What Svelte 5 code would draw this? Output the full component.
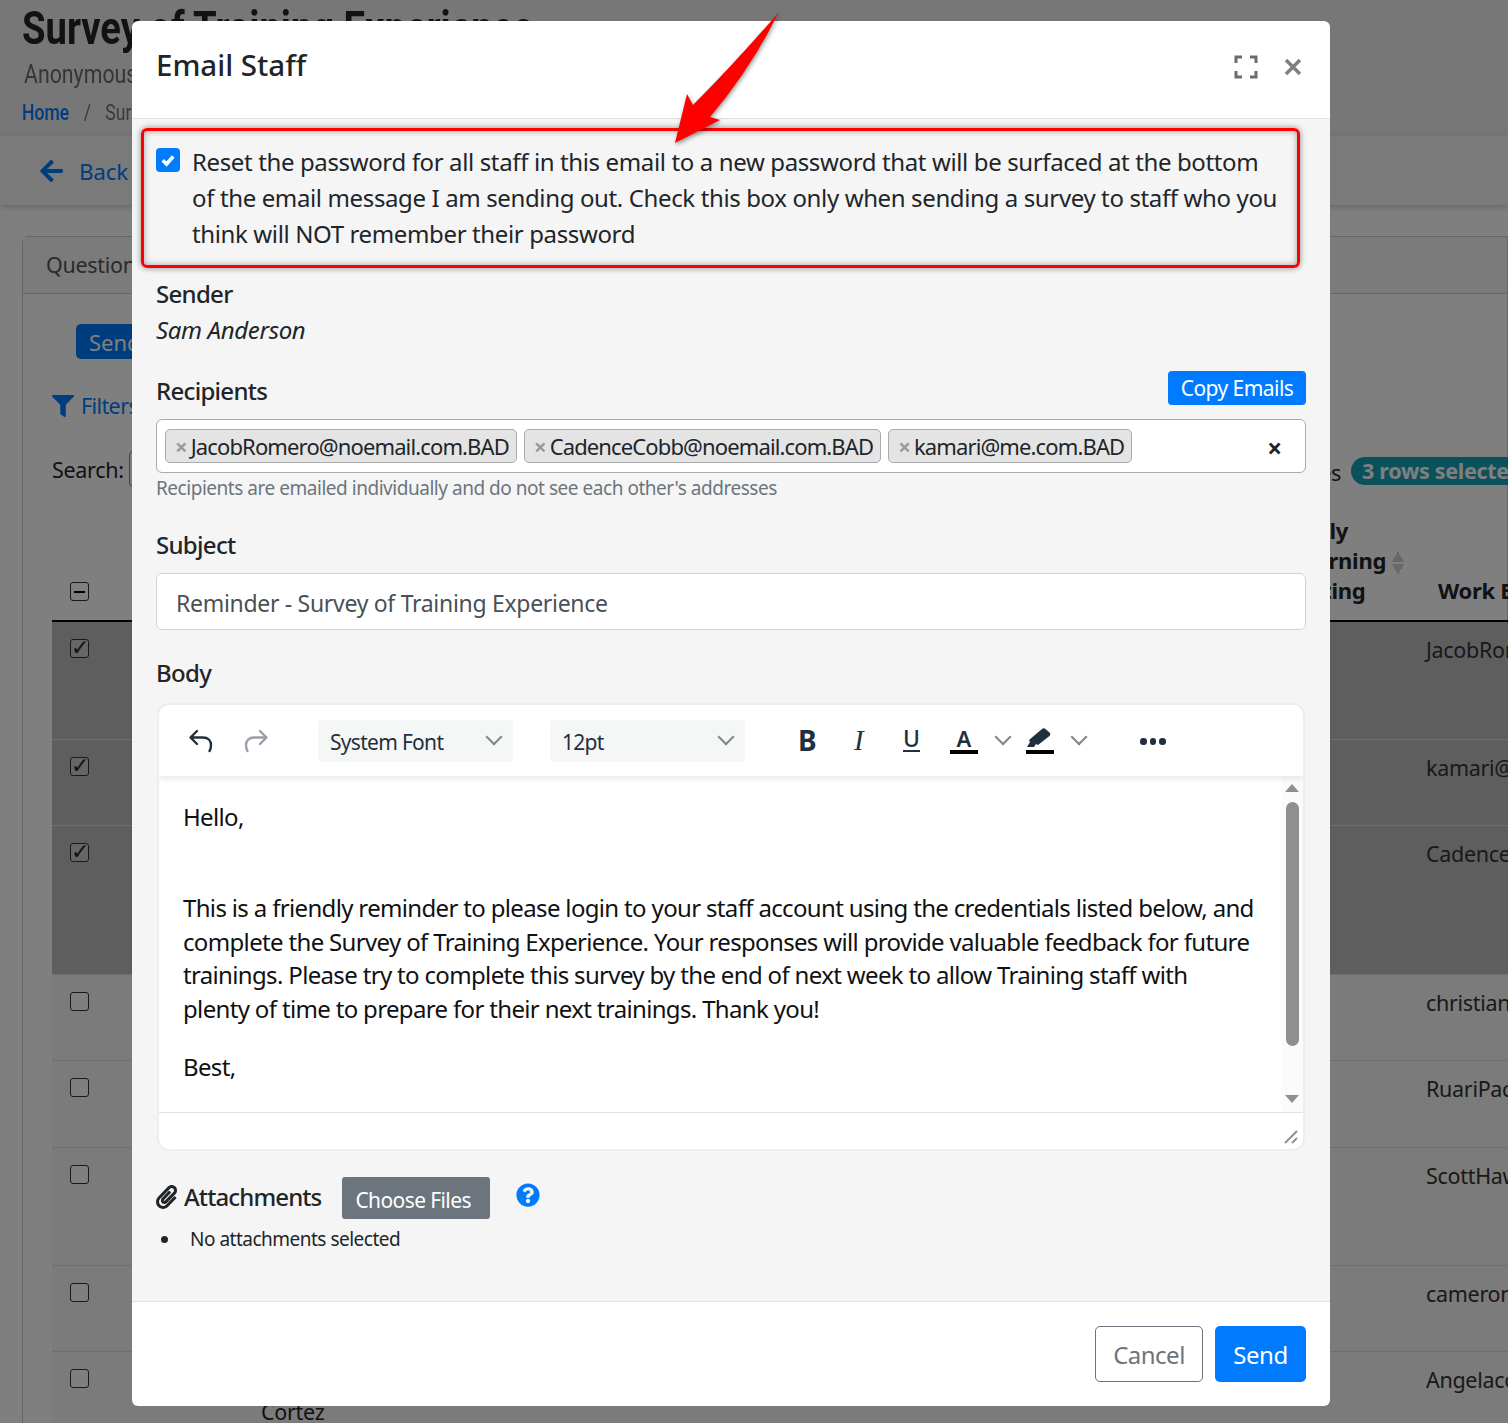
<script>
	const rows = [
		{ name: "Harris", last: "", email: "JacobRomero@noemail.com.BAD", h: 118, on: true },
		{ name: "Hill", last: "", email: "kamari@me.com.BAD", h: 86, on: true },
		{ name: "Hall", last: "", email: "CadenceCobb@noemail.com.BAD", h: 149, on: true },
		{ name: "Hayes", last: "", email: "christian@noemail.com.BAD", h: 86, on: false },
		{ name: "Hunt", last: "", email: "RuariPace@noemail.com.BAD", h: 87, on: false },
		{ name: "Holt", last: "", email: "ScottHawkins@noemail.com.BAD", h: 118, on: false },
		{ name: "Howe", last: "", email: "cameron@noemail.com.BAD", h: 86, on: false },
		{ name: "Hart", last: "Cortez", email: "Angelacortez@noemail.com.BAD", h: 90, on: false }
	];
	const recipients = [
		"JacobRomero@noemail.com.BAD",
		"CadenceCobb@noemail.com.BAD",
		"kamari@me.com.BAD"
	];
</script>

<div class="page">
	<header class="top">
		<h1>Survey of Training Experience</h1>
		<div class="sub">Anonymous</div>
		<div class="crumbs"><a href="#home">Home</a><span>/</span><span>Survey</span></div>
	</header>
	<div class="backbar">
		<svg class="back-arrow" viewBox="0 0 448 512"><path d="M257.5 445.1l-22.2 22.2c-9.4 9.4-24.6 9.4-33.9 0L7 273c-9.4-9.4-9.4-24.6 0-33.9L201.4 44.7c9.4-9.4 24.6-9.4 33.9 0l22.2 22.2c9.5 9.5 9.3 25-.4 34.3L136.6 216H424c13.3 0 24 10.7 24 24v32c0 13.3-10.7 24-24 24H136.6l120.5 114.8c9.8 9.3 10 24.8.4 34.3z" /></svg>
		<a href="#back">Back</a>
	</div>
	<section class="card">
		<div class="card-head">Questions</div>
		<div class="card-body">
			<button class="send-bg">Send</button>
			<div class="filters">
				<svg viewBox="0 0 512 512"><path d="M487.976 0H24.028C2.71 0-8.047 25.866 7.058 40.971L192 225.941V432c0 7.831 3.821 15.17 10.237 19.662l80 55.98C298.02 518.69 320 507.493 320 487.98V225.941l184.947-184.97C520.021 25.896 509.338 0 487.976 0z" /></svg>
				<a href="#filters">Filters</a>
			</div>
			<div class="searchline">
				<label for="q">Search:</label>
				<input id="q" />
				<span class="info">Showing entries</span>
				<span class="pill">3 rows selected</span>
			</div>
			<table>
				<colgroup>
					<col style="width: 70px" />
					<col style="width: 139px" />
					<col style="width: 1165px" />
					<col style="width: 500px" />
				</colgroup>
				<thead>
					<tr>
						<th><span class="box minus"></span></th>
						<th></th>
						<th class="warn">
							<span>Early<br />Warning<i class="sort"></i><br />Rating</span>
						</th>
						<th class="mail">Work Email</th>
					</tr>
				</thead>
				<tbody>
					{#each rows as r}
						<tr class:on={r.on} style="height: {r.h}px">
							<td><span class="box" class:ticked={r.on}>{r.on ? "✓" : ""}</span></td>
							<td><a href="#row">{r.name}</a></td>
							<td class="lastname">{r.last}</td>
							<td class="mailcell">{r.email}</td>
						</tr>
					{/each}
				</tbody>
			</table>
		</div>
	</section>
</div>

<div class="backdrop"></div>

<div class="modal">
	<div class="m-head">
		<h2>Email Staff</h2>
		<div class="m-actions">
			<svg class="expand" viewBox="0 0 24 24"><path d="M2 8V2h6M16 2h6v6M22 16v6h-6M8 22H2v-6" /></svg>
			<svg class="close" viewBox="0 0 20 20"><path d="M3 3l14 14M17 3L3 17" /></svg>
		</div>
	</div>

	<div class="m-body">
		<div class="reset">
			<span class="check">
				<svg viewBox="0 0 16 16"><path d="M4.500 8.200l2.500 2.500 4.500-5" /></svg>
			</span>
			<p>Reset the password for all staff in this email to a new password that will be surfaced at the bottom of the email message I am sending out. Check this box only when sending a survey to staff who you think will NOT remember their password</p>
		</div>

		<div class="label sender">Sender</div>
		<div class="who">Sam Anderson</div>

		<div class="rec-head">
			<div class="label">Recipients</div>
			<button class="copy">Copy Emails</button>
		</div>
		<div class="tags">
			{#each recipients as r}
				<span class="tag"><b>×</b>{r}</span>
			{/each}
			<span class="clear">×</span>
		</div>
		<div class="help">Recipients are emailed individually and do not see each other's addresses</div>

		<div class="label subject">Subject</div>
		<div class="subject-input">Reminder - Survey of Training Experience</div>

		<div class="label bodylabel">Body</div>
		<div class="editor">
			<div class="toolbar">
				<svg class="tool undo" viewBox="0 0 26 26"><path d="M9 3L2.500 9.500L9 16M3 9.500h12c5 0 8 3 8 7.500v0c0 2.500-.5 4.500-1.500 6" /></svg>
				<svg class="tool redo" viewBox="0 0 26 26"><path d="M17 3l6.500 6.500L17 16M23 9.500H11c-5 0-8 3-8 7.500 0 2.500.5 4.500 1.500 6" /></svg>
				<div class="sel first">System Font<i class="chev"></i></div>
				<div class="sel second">12pt<i class="chev"></i></div>
				<span class="t-b">B</span>
				<span class="t-i">I</span>
				<span class="t-u">U</span>
				<span class="t-a">A</span>
				<i class="chev small a-chev"></i>
				<span class="t-hl">
					<svg viewBox="0 0 28 20"><path d="M1 19l3-5-1-2L16 1c1-1 2.500-1 3.500 0l4 3.500c1 1 1 2.500 0 3.500L12 17l-2-1-2 3z" /></svg>
				</span>
				<i class="chev small hl-chev"></i>
				<span class="dots"><i></i><i></i><i></i></span>
			</div>
			<div class="content">
				<div class="text">
					<p>Hello,<br />&nbsp;</p>
					<p>This is a friendly reminder to please login to your staff account using the credentials listed below, and complete the Survey of Training Experience. Your responses will provide valuable feedback for future trainings. Please try to complete this survey by the end of next week to allow Training staff with plenty of time to prepare for their next trainings. Thank you!</p>
					<p>Best,</p>
				</div>
				<div class="scroll">
					<i class="up"></i>
					<div class="thumb"></div>
					<i class="down"></i>
				</div>
			</div>
			<div class="status">
				<svg viewBox="0 0 14 14"><path d="M1 13L13 1M8 13l5-5" /></svg>
			</div>
		</div>

		<div class="attach">
			<svg class="clip" viewBox="0 0 448 512"><path d="M43.246 466.142c-58.43-60.289-57.341-157.511 1.386-217.581L254.392 34c44.316-45.332 116.351-45.336 160.671 0 43.89 44.894 43.943 117.329 0 162.276L232.214 383.128c-29.855 30.537-78.633 30.111-107.982-.998-28.275-29.97-27.368-77.473 1.452-106.953l143.743-146.835c6.182-6.314 16.312-6.422 22.626-.241l22.861 22.379c6.315 6.182 6.422 16.312.241 22.626L171.427 319.927c-4.932 5.045-5.236 13.428-.648 18.292 4.372 4.634 11.245 4.711 15.688.165l182.849-186.851c19.613-20.062 19.613-52.725-.011-72.798-19.189-19.627-49.957-19.637-69.154 0L90.39 293.295c-34.763 35.56-35.299 93.12-1.191 128.313 34.01 35.093 88.985 35.137 123.058.286l172.06-175.999c6.177-6.319 16.307-6.433 22.626-.256l22.877 22.364c6.319 6.177 6.434 16.307.256 22.626l-172.06 175.998c-59.576 60.938-155.943 60.216-214.77-.485z" /></svg>
			<div class="label">Attachments</div>
			<button class="choose">Choose Files</button>
			<svg class="qmark" viewBox="0 0 512 512"><path d="M504 256c0 136.997-111.043 248-248 248S8 392.997 8 256C8 119.083 119.043 8 256 8s248 111.083 248 248zM262.655 90c-54.497 0-89.255 22.957-116.549 63.758-3.536 5.286-2.353 12.415 2.715 16.258l34.699 26.31c5.205 3.947 12.621 3.008 16.665-2.122 17.864-22.658 30.113-35.797 57.303-35.797 20.429 0 45.698 13.148 45.698 32.958 0 14.976-12.363 22.667-32.534 33.976C247.128 238.528 216 254.941 216 296v4c0 6.627 5.373 12 12 12h56c6.627 0 12-5.373 12-12v-1.333c0-28.462 83.186-29.647 83.186-106.667 0-58.002-60.165-102-116.531-102zM256 338c-25.365 0-46 20.635-46 46 0 25.364 20.635 46 46 46s46-20.636 46-46c0-25.365-20.635-46-46-46z" /></svg>
		</div>
		<ul class="files"><li>No attachments selected</li></ul>
	</div>

	<div class="m-foot">
		<button class="cancel">Cancel</button>
		<button class="send">Send</button>
	</div>

	<!-- red callout drawn on top of the screenshot -->
	<div class="callout"></div>
</div>

<svg class="pointer" viewBox="0 0 120 140">
	<path d="M107 0Q62 52 21 93L15 82 3 131 48 108 38 105Q78 58 107 0z" />
</svg>

<style>
	:global(body) {
		margin: 0;
		overflow: hidden;
		background: #fff;
	}

	.page {
		position: relative;
		height: 1423px;
		overflow: hidden;
		font-family: "Noto Sans", sans-serif;
		font-size: 21.5px;
		letter-spacing: -0.3px;
		color: #212529;
		background: #fff;
	}

	.top {
		height: 136px;
		padding-left: 22px;
		box-sizing: border-box;
		background: #eeeeee;
		font-family: Roboto, sans-serif;
		letter-spacing: 0;
	}

	h1 {
		margin: 0;
		padding-top: 2px;
		font-size: 46px;
		line-height: 52px;
		font-weight: 700;
		white-space: nowrap;
		transform: scaleX(0.83);
		transform-origin: left;
	}

	.sub {
		margin: 4px 0 0 2px;
		font-size: 26px;
		line-height: 32px;
		color: #6c6c6c;
		transform: scaleX(0.82);
		transform-origin: left;
	}

	.crumbs {
		display: flex;
		gap: 18px;
		margin-top: 8px;
		font-size: 22px;
		line-height: 30px;
		color: #6c757d;
		transform: scaleX(0.8);
		transform-origin: left;
	}

	.crumbs a {
		color: #007bff;
		font-weight: 500;
		text-decoration: none;
	}

	.backbar {
		display: flex;
		align-items: center;
		gap: 16px;
		height: 69px;
		padding-left: 40px;
		background: #f5f5f5;
		box-shadow: 0 2px 6px rgba(0, 0, 0, 0.2);
		font-size: 22.500px;
	}

	.backbar a {
		color: #007bff;
		text-decoration: none;
		padding-top: 2px;
	}

	.back-arrow {
		width: 23px;
		height: 26px;
		fill: #007bff;
	}

	.card {
		margin: 31px 0 0 22px;
		border: 1px solid #ccc;
		border-radius: 6px 0 0 0;
	}

	.card-head {
		height: 56px;
		padding-left: 23px;
		line-height: 56px;
		background: #f7f7f7;
		border-bottom: 1px solid #ccc;
		color: #555;
	}

	.card-body {
		padding: 30px 0 0 29px;
	}

	.send-bg {
		margin-left: 24px;
		width: 120px;
		height: 35px;
		border: 0;
		border-radius: 5px;
		background: #007bff;
		color: #fff;
		font: 22px "Noto Sans", sans-serif;
		text-align: left;
		padding-left: 13px;
	}

	.filters {
		display: flex;
		align-items: center;
		gap: 7px;
		margin-top: 32px;
		color: #007bff;
		letter-spacing: -0.6px;
	}

	.filters svg {
		width: 22px;
		height: 22px;
		fill: #007bff;
	}

	.filters a {
		color: #007bff;
		text-decoration: none;
	}

	.searchline {
		display: flex;
		align-items: center;
		gap: 5px;
		width: 1499px;
		margin-top: 32px;
		height: 34px;
	}

	.searchline input {
		width: 200px;
		height: 32px;
		border: 1px solid #888;
		border-radius: 4px;
	}

	.info {
		margin-left: auto;
		margin-right: 5px;
		padding-top: 6px;
		white-space: nowrap;
	}

	.pill {
		flex: none;
		align-self: flex-start;
		width: 200px;
		box-sizing: border-box;
		height: 28px;
		margin-top: 5px;
		line-height: 28px;
		padding-left: 11px;
		border-radius: 14px;
		background: #17a2b8;
		color: #fff;
		font-weight: 700;
		white-space: nowrap;
	}

	table {
		table-layout: fixed;
		width: 1874px;
		border-collapse: collapse;
		margin-top: 5px;
	}

	th {
		height: 130px;
		box-sizing: border-box;
		vertical-align: bottom;
		text-align: left;
		padding: 0 0 15px 18px;
		line-height: 30px;
		border-bottom: 2px solid #000;
		font-size: 22px;
	}

	th.warn {
		text-align: right;
		padding-right: 22px;
	}

	th.warn span {
		display: inline-block;
		text-align: left;
	}

	th.mail {
		padding-left: 12px;
	}

	.sort {
		display: inline-block;
		width: 12px;
		height: 24px;
		margin-left: 6px;
		vertical-align: middle;
		background:
			linear-gradient(to bottom right, transparent 50%, #d0d0d0 50%) 0 0 / 6px 11px no-repeat,
			linear-gradient(to bottom left, transparent 50%, #d0d0d0 50%) 6px 0 / 6px 11px no-repeat,
			linear-gradient(to top right, transparent 50%, #d0d0d0 50%) 0 13px / 6px 11px no-repeat,
			linear-gradient(to top left, transparent 50%, #d0d0d0 50%) 6px 13px / 6px 11px no-repeat;
	}

	td {
		vertical-align: top;
		padding: 12px 0 0 18px;
		line-height: 32px;
		border-bottom: 1px solid #ddd;
		background: #f6f6f6;
		white-space: nowrap;
	}

	tr.on td {
		background: #bdbdbd;
	}

	td a {
		color: #007bff;
		text-decoration: none;
		margin-left: 34px;
	}

	td.lastname {
		padding-top: 44px;
		padding-left: 0;
	}

	td.mailcell {
		padding-left: 0;
		color: #333;
	}

	.box {
		display: inline-block;
		position: relative;
		top: 0;
		width: 17px;
		height: 17px;
		border: 1px solid #333;
		border-radius: 3px;
		background: #fff;
		font-size: 22px;
		line-height: 12px;
		text-align: center;
	}

	.box.ticked {
		top: -3px;
		background: #ccc;
	}

	.box.minus {
		top: 2px;
		background: #fff linear-gradient(#000, #000) center / 11px 2px no-repeat;
	}

	.backdrop {
		position: absolute;
		inset: 0;
		height: 1423px;
		background: rgba(0, 0, 0, 0.5);
	}

	.modal {
		position: absolute;
		top: 21px;
		left: 132px;
		width: 1198px;
		height: 1385px;
		display: flex;
		flex-direction: column;
		border-radius: 6px;
		background: #fff;
		overflow: hidden;
		font-family: "Noto Sans", sans-serif;
		font-size: 24px;
		line-height: 36px;
		color: #212529;
	}

	.m-head {
		display: flex;
		justify-content: space-between;
		height: 98px;
		padding: 24px 27px 0 24px;
		box-sizing: border-box;
		border-bottom: 1px solid #dee2e6;
	}

	h2 {
		margin: 0;
		font-size: 29.5px;
		line-height: 40px;
		font-weight: 500;
	}

	.m-actions {
		display: flex;
		gap: 25px;
		padding-top: 10px;
	}

	.expand {
		width: 24px;
		height: 24px;
		fill: none;
		stroke: #6c6c6c;
		stroke-width: 3;
	}

	.close {
		width: 20px;
		height: 24px;
		fill: none;
		stroke: #808080;
		stroke-width: 3.500;
	}

	.m-body {
		flex: 1;
		background: #f5f5f5;
		padding: 25px 24px 0 24px;
	}

	.reset {
		display: flex;
		gap: 12px;
	}

	.check {
		flex: none;
		display: flex;
		width: 24px;
		height: 24px;
		margin-top: 4px;
		border-radius: 4px;
		background: #007bff;
	}

	.check svg {
		width: 24px;
		height: 24px;
		fill: none;
		stroke: #fff;
		stroke-width: 2.400;
	}

	.reset p {
		margin: 0;
		max-width: 1090px;
		letter-spacing: -0.37px;
	}

	.label {
		font-weight: 500;
		letter-spacing: -0.7px;
	}

	.sender {
		margin-top: 24px;
	}

	.who {
		font-style: italic;
		letter-spacing: -0.35px;
	}

	.rec-head {
		display: flex;
		justify-content: space-between;
		align-items: flex-end;
		margin-top: 23px;
		height: 38px;
	}

	button {
		font-family: inherit;
		cursor: default;
	}

	.copy {
		align-self: flex-start;
		width: 138px;
		height: 34px;
		padding: 0;
		border: 0;
		border-radius: 4px;
		background: #007bff;
		color: #fff;
		font-size: 21px;
		line-height: 30px;
		letter-spacing: -0.55px;
	}

	.tags {
		display: flex;
		align-items: center;
		gap: 7px;
		height: 54px;
		margin-top: 10px;
		box-sizing: border-box;
		padding-left: 8px;
		border: 1px solid #aaa;
		border-radius: 6px;
		background: #fff;
	}

	.tag {
		display: flex;
		align-items: center;
		height: 34px;
		box-sizing: border-box;
		padding: 0 7px 0 9px;
		border: 1px solid #aaa;
		border-radius: 5px;
		background: #e4e4e4;
		font-size: 22px;
		letter-spacing: -0.87px;
		white-space: nowrap;
	}

	.tag b {
		margin-right: 4px;
		color: #999;
		font-weight: 700;
	}

	.clear {
		margin-left: auto;
		margin-right: 23px;
		padding-top: 4px;
		font-weight: 700;
		font-size: 26px;
	}

	.help {
		height: 30px;
		line-height: 30px;
		font-size: 19px;
		letter-spacing: -0.47px;
		color: #6c757d;
	}

	.subject {
		margin-top: 24px;
	}

	.subject-input {
		height: 57px;
		margin-top: 10px;
		box-sizing: border-box;
		padding-left: 19px;
		font-size: 23px;
		line-height: 59px;
		border: 1px solid #ced4da;
		border-radius: 6px;
		background: #fff;
		color: #495057;
		letter-spacing: -0.3px;
	}

	.bodylabel {
		margin-top: 25px;
	}

	.editor {
		height: 448px;
		margin: 12px 1px 0 1px;
		box-sizing: border-box;
		display: flex;
		flex-direction: column;
		border: 2px solid #eee;
		border-radius: 12px;
		background: #fff;
		overflow: hidden;
	}

	.toolbar {
		position: relative;
		z-index: 1;
		display: flex;
		align-items: center;
		height: 71px;
		flex: none;
		box-sizing: border-box;
		padding-left: 29px;
		box-shadow: 0 3px 6px rgba(34, 47, 62, 0.1);
		color: #222f3e;
	}

	.tool {
		width: 26px;
		height: 26px;
		fill: none;
		stroke-width: 2.400;
		stroke-linecap: round;
		stroke-linejoin: round;
	}

	.undo {
		stroke: #222f3e;
	}

	.redo {
		margin-left: 29px;
		stroke: #9aa0a7;
	}

	.sel {
		position: relative;
		width: 195px;
		height: 42px;
		box-sizing: border-box;
		padding-left: 12px;
		line-height: 44px;
		border-radius: 4px;
		background: #f5f6f6;
		font-size: 21px;
		letter-spacing: -0.7px;
	}

	.sel.first {
		margin-left: 49px;
	}

	.sel.second {
		margin-left: 37px;
	}

	.chev {
		position: absolute;
		top: 11px;
		right: 13px;
		width: 10px;
		height: 10px;
		border-right: 2px solid #80868d;
		border-bottom: 2px solid #80868d;
		transform: rotate(45deg);
	}

	.chev.small {
		top: 26px;
		right: auto;
	}

	.a-chev {
		left: 838px;
	}

	.hl-chev {
		left: 914px;
	}

	.t-b,
	.t-i,
	.t-u,
	.t-a,
	.t-hl,
	.dots {
		position: absolute;
		top: 0;
		line-height: 70px;
		color: #222f3e;
	}

	.t-b {
		left: 639px;
		font-size: 28px;
		font-weight: 700;
	}

	.t-i {
		left: 695px;
		font: italic 29px/70px "Liberation Serif", serif;
	}

	.t-u {
		left: 744px;
		font-size: 23px;
		font-weight: 500;
		line-height: 66px;
		text-decoration: underline;
		text-decoration-thickness: 2px;
		text-underline-offset: 3px;
	}

	.t-a {
		left: 791px;
		width: 28px;
		height: 45px;
		font-size: 22px;
		font-weight: 600;
		line-height: 66px;
		text-align: center;
		border-bottom: 4px solid #000;
	}

	.t-hl {
		left: 867px;
		width: 28px;
		height: 45px;
		border-bottom: 4px solid #000;
	}

	.t-hl svg {
		position: absolute;
		left: 0;
		top: 23px;
		width: 28px;
		height: 20px;
		fill: #222f3e;
	}

	.dots {
		left: 981px;
		top: 33px;
		display: flex;
		gap: 3px;
	}

	.dots i {
		width: 6.500px;
		height: 6.500px;
		border-radius: 50%;
		background: #222f3e;
	}

	.content {
		flex: 1;
		display: flex;
		min-height: 0;
		border-bottom: 1px solid #e3e3e3;
	}

	.text {
		flex: 1;
		padding: 24px 24px 0 24px;
		font-size: 24px;
		line-height: 33.600px;
		color: #111;
		letter-spacing: -0.66px;
		overflow: hidden;
	}

	.text p {
		margin: 0 0 24px;
	}

	.scroll {
		flex: none;
		width: 22px;
		display: flex;
		flex-direction: column;
		align-items: center;
		background: #fbfbfb;
		padding: 8px 0 9px;
		box-sizing: border-box;
	}

	.up,
	.down {
		width: 0;
		height: 0;
		border-left: 7px solid transparent;
		border-right: 7px solid transparent;
	}

	.up {
		border-bottom: 8px solid #8f8f8f;
	}

	.down {
		margin-top: auto;
		border-top: 8px solid #8f8f8f;
	}

	.thumb {
		width: 13px;
		height: 244px;
		margin-top: 10px;
		border-radius: 7px;
		background: #8f8f8f;
	}

	.status {
		flex: none;
		height: 36px;
		display: flex;
		justify-content: flex-end;
		align-items: flex-end;
		padding: 0 5px 5px 0;
		box-sizing: border-box;
	}

	.status svg {
		width: 14px;
		height: 14px;
		fill: none;
		stroke: #8a8f96;
		stroke-width: 1.800;
	}

	.attach {
		display: flex;
		align-items: center;
		height: 42px;
		margin-top: 26px;
	}

	.attach .label {
		margin-top: -3px;
		letter-spacing: -0.88px;
	}

	.clip {
		width: 21px;
		height: 24px;
		margin: -3px 7px 0 0;
		fill: #212529;
	}

	.choose {
		width: 148px;
		height: 42px;
		margin-left: 21px;
		padding: 3px 0 0 13px;
		border: 0;
		border-radius: 3px;
		background: #6c757d;
		color: #fff;
		font-size: 21px;
		letter-spacing: -0.6px;
		text-align: left;
	}

	.qmark {
		width: 24px;
		height: 24px;
		margin: -6px 0 0 26px;
		fill: #007bff;
	}

	.files {
		margin: 5px 0 0;
		padding: 0 0 0 5px;
		list-style: none;
		font-size: 19px;
		line-height: 30px;
		letter-spacing: -0.5px;
	}

	.files li {
		display: flex;
		align-items: center;
		gap: 22px;
	}

	.files li::before {
		content: "";
		width: 7px;
		height: 7px;
		border-radius: 50%;
		background: #212529;
	}

	.m-foot {
		display: flex;
		justify-content: flex-end;
		gap: 12px;
		height: 105px;
		box-sizing: border-box;
		padding: 24px 24px 0;
		border-top: 1px solid #dee2e6;
	}

	.m-foot button {
		height: 56px;
		font-size: 24px;
		border-radius: 5px;
		letter-spacing: -0.5px;
	}

	.cancel {
		width: 108px;
		background: #fff;
		border: 1px solid #6c757d;
		color: #6c757d;
	}

	.send {
		width: 91px;
		border: 0;
		background: #007bff;
		color: #fff;
	}

	.callout {
		position: absolute;
		left: 9px;
		top: 107px;
		width: 1159px;
		height: 140px;
		box-sizing: border-box;
		border: 3px solid #f00;
		border-radius: 6px;
		box-shadow: 0 0 6px rgba(0, 0, 0, 0.45), inset 0 0 6px rgba(0, 0, 0, 0.35);
		pointer-events: none;
	}

	.pointer {
		position: absolute;
		left: 672px;
		top: 12px;
		width: 120px;
		height: 140px;
		fill: #f00;
		filter: drop-shadow(1px 2px 2px rgba(0, 0, 0, 0.4));
	}
</style>
